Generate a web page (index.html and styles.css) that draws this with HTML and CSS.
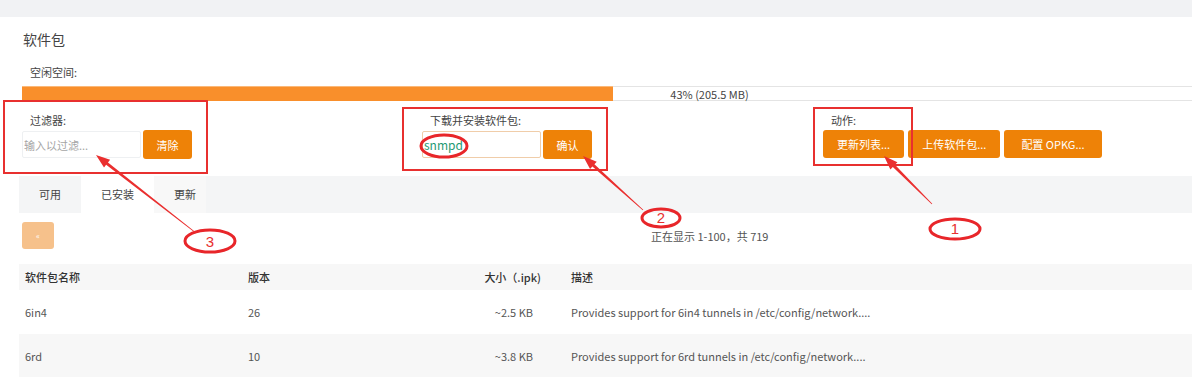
FILE: index.html
```html
<!DOCTYPE html>
<html lang="zh-CN">
<head>
    <meta charset="UTF-8">
    <title>软件包</title>
    <link rel="stylesheet" href="styles.css">
</head>
<body>
    <div class="topbar"></div>
    <div class="page">
        <h2 class="title">软件包</h2>
        <div class="free-label">空闲空间:</div>
        <div class="progress">
            <div class="progress-fill" style="width: 43%"></div>
            <span class="progress-text">43% (205.5 MB)</span>
        </div>

        <div class="controls">
            <div class="control">
                <label class="control-label">过滤器:</label>
                <div class="control-row">
                    <input class="text-input filter-input" type="text" placeholder="输入以过滤...">
                    <button class="btn">清除</button>
                </div>
            </div>
            <div class="control">
                <label class="control-label">下载并安装软件包:</label>
                <div class="control-row">
                    <input class="text-input install-input" type="text" value="snmpd">
                    <button class="btn">确认</button>
                </div>
            </div>
            <div class="control">
                <label class="control-label">动作:</label>
                <div class="control-row actions">
                    <button class="btn btn-wide">更新列表...</button>
                    <button class="btn btn-wide">上传软件包...</button>
                    <button class="btn btn-wide">配置 OPKG...</button>
                </div>
            </div>
        </div>

        <ul class="tabs">
            <li class="tab">可用</li>
            <li class="tab active">已安装</li>
            <li class="tab light">更新</li>
        </ul>

        <div class="pager">
            <button class="btn pager-btn" disabled>«</button>
            <span class="pager-info">正在显示 1-100，共 719</span>
        </div>

        <table class="pkg-table">
            <colgroup>
                <col style="width: 223px">
                <col style="width: 200px">
                <col style="width: 123px">
                <col>
            </colgroup>
            <thead>
                <tr>
                    <th>软件包名称</th>
                    <th>版本</th>
                    <th class="col-size">大小（.ipk)</th>
                    <th>描述</th>
                </tr>
            </thead>
            <tbody>
                <tr>
                    <td>6in4</td>
                    <td>26</td>
                    <td class="col-size">~2.5 KB</td>
                    <td>Provides support for 6in4 tunnels in /etc/config/network....</td>
                </tr>
                <tr>
                    <td>6rd</td>
                    <td>10</td>
                    <td class="col-size">~3.8 KB</td>
                    <td>Provides support for 6rd tunnels in /etc/config/network....</td>
                </tr>
            </tbody>
        </table>
    </div>

    <!-- annotations drawn over the screenshot -->
    <svg class="marks" width="1192" height="377" viewBox="0 0 1192 377">
        <g fill="none" stroke="#e8302f" stroke-width="2">
            <rect x="4" y="101" width="203" height="72"/>
            <rect x="403" y="108" width="204" height="62"/>
            <rect x="814" y="108" width="98" height="57"/>
        </g>
        <g fill="none" stroke="#e8262a" stroke-width="3">
            <ellipse cx="444" cy="146" rx="23" ry="11"/>
            <ellipse cx="955" cy="229" rx="25" ry="10"/>
            <ellipse cx="661" cy="218" rx="19" ry="9"/>
            <ellipse cx="210" cy="241" rx="25" ry="11"/>
        </g>
        <g fill="#ea2f2f">
            <polygon points="196.25,232.68 107.97,162.43 110.1,159.7 96,155 104,167.6 106.13,164.79 195.75,233.32"/>
            <polygon points="643.27,209.7 594.4,164.26 596.75,161.66 583,156 590.06,169.09 592.4,166.48 642.73,210.3"/>
            <polygon points="932.28,203.72 894.96,164.84 897.44,162.36 884,156 890.36,169.44 892.84,166.96 931.72,204.28"/>
        </g>
        <g class="mark-num" fill="#e8302f">
            <text x="955" y="234">1</text>
            <text x="661" y="223">2</text>
            <text x="210" y="247">3</text>
        </g>
    </svg>
</body>
</html>
```

FILE: styles.css
```css
html, body {
    margin: 0;
    overflow: hidden;
}
body {
    font-family: "Noto Sans CJK SC", "Noto Sans", sans-serif;
    font-size: 11px;
    color: #555;
    background: #fff;
    position: relative;
}
.topbar {
    height: 17px;
    background: #f1f2f4;
}
.page {
    width: 1400px;
    padding: 0 0 0 19px;
}
.title {
    margin: 12px 0 0 4px;
    font-size: 14px;
    font-weight: normal;
    line-height: 20px;
    color: #444;
}
.free-label {
    margin: 15px 0 0 11px;
    line-height: 16px;
    color: #444;
}
.progress {
    position: relative;
    margin: 6px 0 0 3px;
    width: 1375px;
    height: 15px;
    border-top: 1px solid #e4e4e4;
    border-bottom: 1px solid #e4e4e4;
    box-sizing: border-box;
}
.progress-fill {
    background: #f98f2b;
    border-top: 1px solid #fbb878;
    box-sizing: border-box;
    margin-top: -1px;
    height: 15px;
}
.progress-text {
    position: absolute;
    left: 0;
    right: 0;
    top: 0;
    line-height: 14px;
    text-align: center;
    color: #444;
}
.controls {
    display: grid;
    grid-template-columns: 400px 401px 400px;
    margin: 11px 0 0 3px;
}
.control-label {
    display: block;
    padding-left: 8px;
    line-height: 16px;
    color: #444;
}
.control-row {
    display: flex;
    align-items: center;
    gap: 2px;
    margin-top: 2px;
}
.actions {
    gap: 4px;
}
.text-input {
    height: 27px;
    width: 119px;
    padding: 0 1px;
    box-sizing: border-box;
    font-family: inherit;
    font-size: 11px;
    border: 1px solid #eef0f2;
    border-radius: 2px;
    outline: none;
}
.filter-input::placeholder {
    color: #a5a5a5;
}
.install-input {
    border-color: #f0cda9;
    color: #1f9a74;
    font-size: 12px;
}
.btn {
    height: 29px;
    min-width: 49px;
    padding: 0 10px;
    border: none;
    border-radius: 3px;
    background: #ee8207;
    color: #fff;
    font-family: inherit;
    font-size: 11px;
}
.btn-wide {
    height: 28px;
    padding: 0 14px;
}
.btn-wide:last-child {
    padding: 0 17px;
}
.tabs {
    display: flex;
    list-style: none;
    margin: 17px 0 0;
    padding: 0;
    height: 37px;
    background: #f4f5f6;
}
.tab {
    line-height: 37px;
    padding: 0 20px;
    color: #444;
}
.tab.active {
    background: #fff;
}
.tab.light {
    background: #f8f8f8;
    padding: 0 10px 0 20px;
}
.pager {
    display: flex;
    align-items: center;
    height: 27px;
    margin: 9px 0 0 3px;
}
.pager-btn {
    width: 32px;
    min-width: 0;
    height: 27px;
    padding: 0;
    background: #f6c18b;
    font-size: 8px;
}
.pager-info {
    margin-left: 597px;
    color: #555;
}
.pkg-table {
    margin-top: 15px;
    width: 1380px;
    table-layout: fixed;
    border-collapse: collapse;
}
.pkg-table th {
    height: 26px;
    padding: 0 6px;
    text-align: left;
    font-weight: 500;
    color: #333;
    background: #f7f7f7;
}
.pkg-table td {
    height: 44px;
    padding: 0 6px;
    color: #555;
}
.pkg-table tbody tr:nth-child(2) td {
    background: #f7f7f7;
}
.pkg-table .col-size {
    text-align: right;
    padding-right: 24px;
}
.pkg-table td.col-size {
    padding-right: 32px;
}
.marks {
    position: absolute;
    left: 0;
    top: 0;
    pointer-events: none;
}
.mark-num {
    font-family: "Liberation Sans", sans-serif;
    font-size: 15px;
    text-anchor: middle;
}
```
